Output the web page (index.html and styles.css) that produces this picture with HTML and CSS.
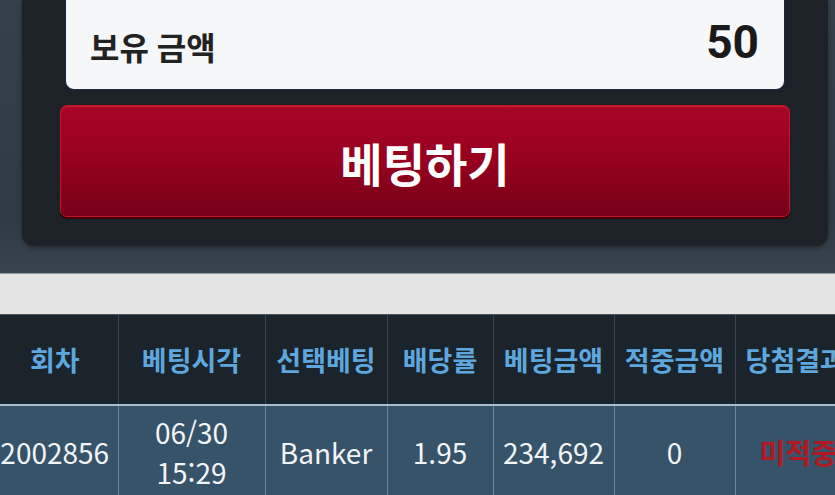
FILE: index.html
```html
<!DOCTYPE html>
<html lang="ko">
<head>
<meta charset="utf-8">
<link rel="stylesheet" href="styles.css">
</head>
<body>
<div class="page">
  <div class="top">
    <div class="panel">
      <div class="balance">
        <span class="balance-label">보유 금액</span>
        <span class="balance-value">50</span>
      </div>
      <button class="bet-btn">베팅하기</button>
    </div>
  </div>
  <div class="gray-bar"></div>
  <table class="history">
    <colgroup>
      <col class="c1"><col class="c2"><col class="c3"><col class="c4"><col class="c5"><col class="c6"><col class="c7">
    </colgroup>
    <thead>
      <tr>
        <th>회차</th><th>베팅시각</th><th>선택베팅</th><th>배당률</th><th>베팅금액</th><th>적중금액</th><th>당첨결과</th>
      </tr>
    </thead>
    <tbody>
      <tr>
        <td>2002856</td>
        <td class="time">06/30<br>15:29</td>
        <td>Banker</td>
        <td>1.95</td>
        <td>234,692</td>
        <td>0</td>
        <td class="miss">미적중</td>
      </tr>
    </tbody>
  </table>
</div>
</body>
</html>
```

FILE: styles.css
```css
html, body {
  margin: 0;
  padding: 0;
}
body {
  width: 835px;
  height: 495px;
  overflow: hidden;
  background: #36434d;
  font-family: "Noto Sans CJK KR", "Noto Sans", sans-serif;
}
.page {
  width: 835px;
}
.top {
  background: linear-gradient(to bottom, #34414b 0%, #2f3b44 80%, #38444e 100%);
  padding-bottom: 27px;
}
.panel {
  margin-left: 22px;
  width: 806px;
  box-sizing: border-box;
  background: #1c2227;
  border-radius: 0 0 12px 12px;
  padding: 0 38px 29px 38px;
  display: flex;
  flex-direction: column;
  gap: 15px;
  box-shadow: 0 2px 4px rgba(0,0,0,0.35);
}
.balance {
  margin: -10px 5px 0 5px;
  height: 100px;
  box-sizing: border-box;
  background: #f6f7f8;
  border: 1px solid #1b2a48;
  border-radius: 9px;
  display: flex;
  justify-content: space-between;
  align-items: flex-start;
  padding: 0 25px 0 24px;
}
.balance-label {
  font-family: "Roboto", "Noto Sans CJK KR", sans-serif;
  font-weight: 700;
  font-size: 32px;
  color: #222;
  line-height: 1;
  margin-top: 42px;
}
.balance-value {
  font-family: "Roboto", sans-serif;
  font-weight: 700;
  font-size: 46px;
  color: #1a1a1a;
  line-height: 1;
  margin-top: 28px;
}
.bet-btn {
  display: block;
  width: 100%;
  height: 112px;
  box-sizing: border-box;
  border: 1px solid #c3121f;
  border-radius: 7px;
  background: linear-gradient(to bottom, #a90428 0%, #960220 50%, #760017 100%);
  box-shadow: inset 0 1px 0 rgba(255,90,90,0.35), 0 2px 0 #3b0009;
  color: #fff;
  font-family: "Roboto", "Noto Sans CJK KR", sans-serif;
  font-weight: 700;
  font-size: 46px;
  padding: 10px 0 0 0;
  line-height: 1;
  cursor: pointer;
}
.gray-bar {
  height: 40px;
  background: #e4e4e4;
  border-top: 1px solid #8f9ba4;
}
.history {
  border-collapse: collapse;
  table-layout: fixed;
  width: 855px;
}
.c1 { width: 118px; }
.c2 { width: 147px; }
.c3 { width: 122px; }
.c4 { width: 106px; }
.c5 { width: 121px; }
.c6 { width: 121px; }
.c7 { width: 120px; }
.history th {
  background: #1b232b;
  color: #5da7de;
  font-weight: 700;
  font-size: 27px;
  height: 89px;
  padding: 0;
  white-space: nowrap;
  border-left: 1px solid #39444e;
  border-bottom: 2px solid #a9bdcc;
  border-top: 1px solid #4a5660;
}
.history th:first-child, .history td:first-child {
  border-left: none;
  padding-right: 8px;
}
.history td {
  background: #37536a;
  color: #f2f5f7;
  font-size: 28px;
  font-weight: 400;
  text-align: center;
  height: 92px;
  padding: 0;
  white-space: nowrap;
  border-left: 1px solid #6a889d;
}
.history td.time {
  line-height: 40px;
}
.history td.miss {
  color: #b01822;
  font-weight: 700;
  padding-left: 6px;
}
```
